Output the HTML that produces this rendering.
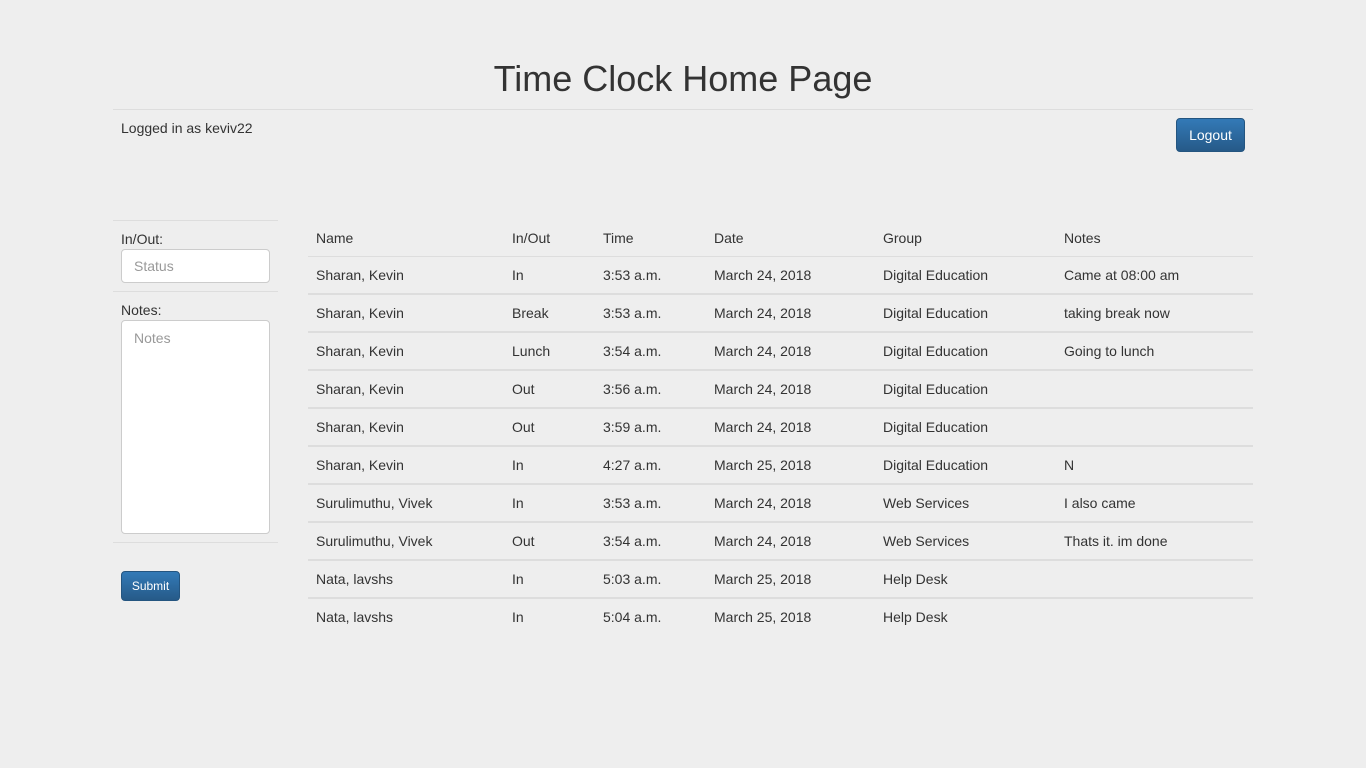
<!DOCTYPE html>
<html><head><style>
body{margin:0;background:#eee;font-family:"Liberation Sans",Arial,sans-serif;font-size:14px;color:#333;width:1366px;height:768px;position:relative;overflow:hidden}
.a{position:absolute;white-space:nowrap}
h1{position:absolute;left:0;width:1366px;top:58px;margin:0;text-align:center;font-size:36px;font-weight:normal;color:#333}
.hr{position:absolute;height:1px;background:#ddd}
.btn{position:absolute;color:#fff;border:1px solid #245580;border-radius:4px;background:linear-gradient(#337ab7,#265a88);text-align:center}
.row{position:absolute;left:308px;width:945px;height:38px;border-top:2px solid #ddd}
.row span{position:absolute;top:10px}
.c1{left:8px}.c2{left:204px}.c3{left:295px}.c4{left:406px}.c5{left:575px}.c6{left:756px}
</style></head><body>
<h1>Time Clock Home Page</h1>
<div class="hr" style="left:113px;width:1140px;top:109px"></div>
<div class="a" style="left:121px;top:120px">Logged in as keviv22</div>
<div class="btn" style="left:1176px;top:118px;width:67px;height:32px;line-height:33px">Logout</div>

<div class="hr" style="left:113px;width:165px;top:220px"></div>
<div class="a" style="left:121px;top:231px">In/Out:</div>
<div class="a" style="left:121px;top:249px;width:147px;height:32px;background:#fff;border:1px solid #ccc;border-radius:4px"><span style="position:absolute;left:12px;top:8px;color:#999">Status</span></div>
<div class="hr" style="left:113px;width:165px;top:291px"></div>
<div class="a" style="left:121px;top:302px">Notes:</div>
<div class="a" style="left:121px;top:320px;width:147px;height:212px;background:#fff;border:1px solid #ccc;border-radius:4px"><span style="position:absolute;left:12px;top:9px;color:#999">Notes</span></div>
<div class="hr" style="left:113px;width:165px;top:542px"></div>
<div class="btn" style="left:121px;top:571px;width:57px;height:28px;line-height:28px;font-size:12px">Submit</div>

<div class="a" style="left:308px;top:230px;width:945px;height:26px">
<span class="a" style="left:8px">Name</span><span class="a" style="left:204px">In/Out</span><span class="a" style="left:295px">Time</span><span class="a" style="left:406px">Date</span><span class="a" style="left:575px">Group</span><span class="a" style="left:756px">Notes</span></div>
<div class="row" style="top:256px;border-top-width:1px;height:38px"><span class="c1">Sharan, Kevin</span><span class="c2">In</span><span class="c3">3:53 a.m.</span><span class="c4">March 24, 2018</span><span class="c5">Digital Education</span><span class="c6">Came at 08:00 am</span></div>
<div class="row" style="top:293px"><span class="c1">Sharan, Kevin</span><span class="c2">Break</span><span class="c3">3:53 a.m.</span><span class="c4">March 24, 2018</span><span class="c5">Digital Education</span><span class="c6">taking break now</span></div>
<div class="row" style="top:331px"><span class="c1">Sharan, Kevin</span><span class="c2">Lunch</span><span class="c3">3:54 a.m.</span><span class="c4">March 24, 2018</span><span class="c5">Digital Education</span><span class="c6">Going to lunch</span></div>
<div class="row" style="top:369px"><span class="c1">Sharan, Kevin</span><span class="c2">Out</span><span class="c3">3:56 a.m.</span><span class="c4">March 24, 2018</span><span class="c5">Digital Education</span></div>
<div class="row" style="top:407px"><span class="c1">Sharan, Kevin</span><span class="c2">Out</span><span class="c3">3:59 a.m.</span><span class="c4">March 24, 2018</span><span class="c5">Digital Education</span></div>
<div class="row" style="top:445px"><span class="c1">Sharan, Kevin</span><span class="c2">In</span><span class="c3">4:27 a.m.</span><span class="c4">March 25, 2018</span><span class="c5">Digital Education</span><span class="c6">N</span></div>
<div class="row" style="top:483px"><span class="c1">Surulimuthu, Vivek</span><span class="c2">In</span><span class="c3">3:53 a.m.</span><span class="c4">March 24, 2018</span><span class="c5">Web Services</span><span class="c6">I also came</span></div>
<div class="row" style="top:521px"><span class="c1">Surulimuthu, Vivek</span><span class="c2">Out</span><span class="c3">3:54 a.m.</span><span class="c4">March 24, 2018</span><span class="c5">Web Services</span><span class="c6">Thats it. im done</span></div>
<div class="row" style="top:559px"><span class="c1">Nata, lavshs</span><span class="c2">In</span><span class="c3">5:03 a.m.</span><span class="c4">March 25, 2018</span><span class="c5">Help Desk</span></div>
<div class="row" style="top:597px"><span class="c1">Nata, lavshs</span><span class="c2">In</span><span class="c3">5:04 a.m.</span><span class="c4">March 25, 2018</span><span class="c5">Help Desk</span></div>
</body></html>
